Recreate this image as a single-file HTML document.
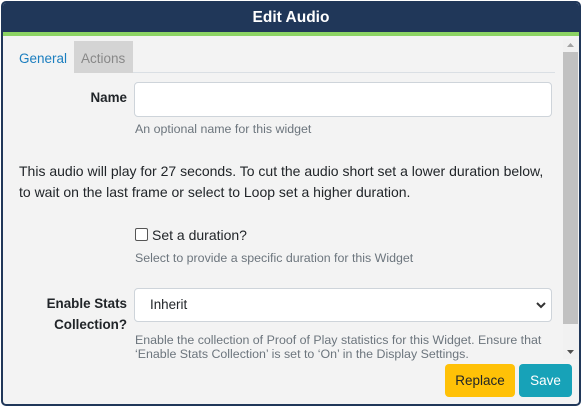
<!DOCTYPE html>
<html><head><style>
*{box-sizing:border-box;margin:0;padding:0}
body{width:583px;height:407px;background:#fff;font-family:"Liberation Sans",sans-serif;position:relative;overflow:hidden}
.frame{position:absolute;left:1px;top:1px;width:580px;height:405px;border:2px solid #203759;border-radius:5px;background:#f3f3f3;overflow:hidden}
.hdr{position:absolute;left:0;top:0;width:100%;height:29px;background:#203759;color:#fff;font-weight:bold;font-size:15.5px;text-align:center;line-height:30px}
.green{position:absolute;left:0;top:29px;width:100%;height:4px;background:#8cd363}
.a{position:absolute;white-space:nowrap}
.help{color:#6c757d;font-size:12.4px}
.txt{color:#212529;font-size:13.4px}
.inp{position:absolute;background:#fff;border:1px solid #ced4da;border-radius:4px}
</style></head><body>
<div class="frame">
<div class="hdr">Edit Audio</div>
<div class="green"></div>
<div class="a" style="left:16px;top:48px;font-size:13.5px;color:#1b7ebf">General</div>
<div class="a" style="left:71px;top:38px;width:59px;height:32px;background:#d4d4d4;color:#888;font-size:13.5px;padding:10px 0 0 7px">Actions</div>
<div class="a" style="left:130px;top:69px;width:422px;height:1px;background:#dadfe4"></div>
<div class="a txt" style="left:0;width:124px;text-align:right;top:87px;font-weight:bold">Name</div>
<div class="inp" style="left:131px;top:79px;width:418px;height:35px"></div>
<div class="a help" style="left:132px;top:119px">An optional name for this widget</div>
<div class="a txt" style="left:16px;top:160px;font-size:14px">This audio will play for 27 seconds. To cut the audio short set a lower duration below,</div>
<div class="a txt" style="left:16px;top:181px;font-size:14px">to wait on the last frame or select to Loop set a higher duration.</div>
<div class="a" style="left:132px;top:225px;width:13px;height:13px;border:1px solid #555;border-radius:2px;background:#fff"></div>
<div class="a txt" style="left:149px;top:224px;font-size:14px">Set a duration?</div>
<div class="a help" style="left:132px;top:248px">Select to provide a specific duration for this Widget</div>
<div class="a txt" style="left:0;width:124px;text-align:right;top:290px;font-weight:bold;line-height:21px;white-space:normal">Enable Stats<br>Collection?</div>
<div class="inp" style="left:131px;top:285px;width:418px;height:34px"></div>
<div class="a txt" style="left:147px;top:294px">Inherit</div>
<svg class="a" style="left:532px;top:297px" width="12" height="10"><path d="M2 3 L6 7 L10 3" stroke="#333" stroke-width="2" fill="none"/></svg>
<div class="a help" style="left:132px;top:330px">Enable the collection of Proof of Play statistics for this Widget. Ensure that</div>
<div class="a help" style="left:132px;top:344px">‘Enable Stats Collection’ is set to ‘On’ in the Display Settings.</div>
<div class="a" style="left:560px;top:36px;width:15px;height:320px;background:#f1f1f1"></div>
<svg class="a" style="left:563px;top:38px" width="9" height="8"><path d="M1 6 L4.5 2 L8 6Z" fill="#a3a3a3"/></svg>
<div class="a" style="left:560px;top:49px;width:15px;height:272px;background:#c1c1c1"></div>
<svg class="a" style="left:563px;top:345px" width="9" height="8"><path d="M1 2 L4.5 6 L8 2Z" fill="#505050"/></svg>
<div class="a" style="left:442px;top:361px;width:70px;height:33px;background:#ffc107;border-radius:4px;color:#212529;font-size:13.5px;text-align:center;line-height:33px">Replace</div>
<div class="a" style="left:516px;top:361px;width:53px;height:33px;background:#17a2b8;border-radius:4px;color:#fff;font-size:13.5px;text-align:center;line-height:33px">Save</div>
</div>
</body></html>
